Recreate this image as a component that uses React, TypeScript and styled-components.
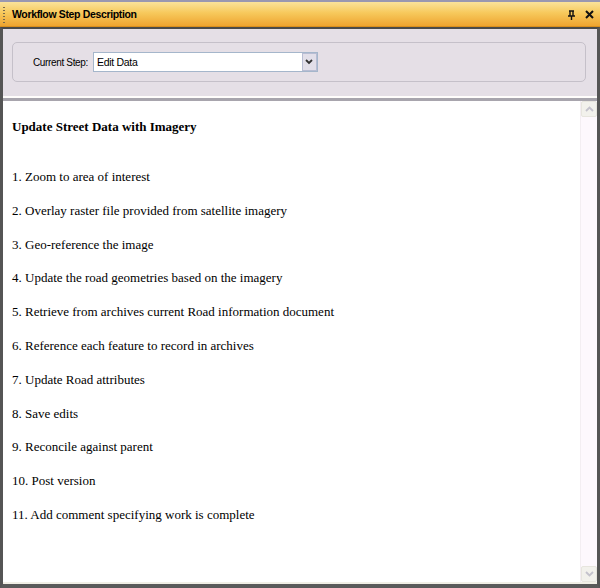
import React from "react";
import styled, { createGlobalStyle } from "styled-components";

const steps = [
  "Zoom to area of interest",
  "Overlay raster file provided from satellite imagery",
  "Geo-reference the image",
  "Update the road geometries based on the imagery",
  "Retrieve from archives current Road information document",
  "Reference each feature to record in archives",
  "Update Road attributes",
  "Save edits",
  "Reconcile against parent",
  "Post version",
  "Add comment specifying work is complete",
];

const App: React.FC = () => {
  return (
    <>
      <GlobalStyle />
      <SWindow>
        <STitleBar>
          <SGrip />
          <STitle>Workflow Step Description</STitle>
          <STitleButtons>
            <svg width="9" height="10" viewBox="0 0 9 10">
              <path d="M2 1h5M3 1v5M6 1v5M1 6h7M4.5 6v4" stroke="#111" strokeWidth="1.4" fill="none" />
            </svg>
            <svg width="9" height="9" viewBox="0 0 9 9">
              <path d="M1 1l7 7M8 1l-7 7" stroke="#111" strokeWidth="2" fill="none" />
            </svg>
          </STitleButtons>
        </STitleBar>
        <SFrame>
          <SControlPanel>
            <SGroupBox>
              <SLabel>Current Step:</SLabel>
              <SCombo>
                <SComboText>Edit Data</SComboText>
                <SComboButton>
                  <svg width="8" height="6" viewBox="0 0 8 6">
                    <path d="M1 1l3 3 3-3" stroke="#333" strokeWidth="1.8" fill="none" />
                  </svg>
                </SComboButton>
              </SCombo>
            </SGroupBox>
          </SControlPanel>
          <SContentArea>
            <SDocument>
              <SHeading>Update Street Data with Imagery</SHeading>
              <SList>
                {steps.map((step, i) => (
                  <SItem key={step}>
                    {i + 1}. {step}
                  </SItem>
                ))}
              </SList>
            </SDocument>
            <SScrollbar>
              <SScrollButton>
                <svg width="9" height="6" viewBox="0 0 9 6">
                  <path d="M1 5l3.5-3.5L8 5" stroke="#c4c2cc" strokeWidth="1.8" fill="none" />
                </svg>
              </SScrollButton>
              <SScrollButton>
                <svg width="9" height="6" viewBox="0 0 9 6">
                  <path d="M1 1l3.5 3.5L8 1" stroke="#c4c2cc" strokeWidth="1.8" fill="none" />
                </svg>
              </SScrollButton>
            </SScrollbar>
          </SContentArea>
        </SFrame>
      </SWindow>
    </>
  );
};

export default App;

const GlobalStyle = createGlobalStyle`
  html, body {
    margin: 0;
    padding: 0;
    background: #ffffff;
  }
`;

const uiFont = `Tahoma, "Liberation Sans", Arial, sans-serif`;

const SWindow = styled.div`
  width: 600px;
  height: 588px;
  display: flex;
  flex-direction: column;
  box-sizing: border-box;
  border-top: 2px solid #9a97b0;
  background: #ffffff;
`;

const STitleBar = styled.div`
  height: 25px;
  display: flex;
  align-items: center;
  box-sizing: border-box;
  padding: 0 6px 0 3px;
  background: linear-gradient(to bottom, #fbe29a 0%, #f7c95c 45%, #eea430 100%);
  border-bottom: 1px solid #d98f1c;
`;

const SGrip = styled.div`
  width: 2px;
  height: 17px;
  margin-right: 7px;
  background-image: radial-gradient(circle, #7a6a4a 0.8px, transparent 1px);
  background-size: 2px 3px;
`;

const STitle = styled.div`
  flex: 1;
  font-family: ${uiFont};
  font-size: 10.5px;
  font-weight: bold;
  color: #000;
  letter-spacing: -0.35px;
`;

const STitleButtons = styled.div`
  display: flex;
  align-items: center;
  gap: 9px;
  padding-top: 1px;
`;

const SFrame = styled.div`
  flex: 1;
  display: flex;
  flex-direction: column;
  box-sizing: border-box;
  border-left: 3px solid #555555;
  border-right: 3px solid #555555;
  border-bottom: 4px solid #5a5a5a;
  border-top: 2px solid #4a4a4a;
`;

const SControlPanel = styled.div`
  height: 69px;
  box-sizing: border-box;
  padding: 13px 11px 0 9px;
  background: #e5dfe6;
  border-bottom: 2px solid #fffdfb;
`;

const SGroupBox = styled.div`
  height: 40px;
  box-sizing: border-box;
  display: flex;
  align-items: center;
  padding-left: 20px;
  border: 1px solid #c5c0c9;
  border-radius: 5px;
`;

const SLabel = styled.span`
  font-family: ${uiFont};
  font-size: 10px;
  color: #000;
  margin-right: 5px;
  letter-spacing: -0.35px;
`;

const SCombo = styled.div`
  width: 225px;
  height: 20px;
  box-sizing: border-box;
  display: flex;
  align-items: center;
  border: 1px solid #a5b6cb;
  background: #ffffff;
`;

const SComboText = styled.span`
  flex: 1;
  padding-left: 3px;
  font-family: ${uiFont};
  font-size: 10.5px;
  color: #000;
  letter-spacing: -0.3px;
`;

const SComboButton = styled.div`
  width: 15px;
  height: 18px;
  box-sizing: border-box;
  display: flex;
  align-items: center;
  justify-content: center;
  background: #e2dfe9;
  border: 1px solid #b8bdd3;
`;

const SContentArea = styled.div`
  flex: 1;
  display: flex;
  min-height: 0;
  border-top: 3px solid #a8a5ad;
  border-bottom: 2px solid #f1efe6;
`;

const SDocument = styled.div`
  flex: 1;
  padding: 17px 9px 0;
  font-family: "Liberation Serif", "Times New Roman", serif;
  font-size: 13px;
  color: #000;
`;

const SHeading = styled.div`
  font-weight: bold;
  line-height: 18px;
  margin-bottom: 33px;
`;

const SList = styled.div`
  display: flex;
  flex-direction: column;
`;

const SItem = styled.div`
  height: 33.8px;
  line-height: 16px;
`;

const SScrollbar = styled.div`
  width: 16px;
  display: flex;
  flex-direction: column;
  justify-content: space-between;
  background: #fdf8fd;
  border-left: 1px solid #f3eef2;
`;

const SScrollButton = styled.div`
  width: 16px;
  height: 16px;
  box-sizing: border-box;
  display: flex;
  align-items: center;
  justify-content: center;
  background: #f2f1ec;
  border: 1px solid #e7e5de;
  border-radius: 2px;
`;
